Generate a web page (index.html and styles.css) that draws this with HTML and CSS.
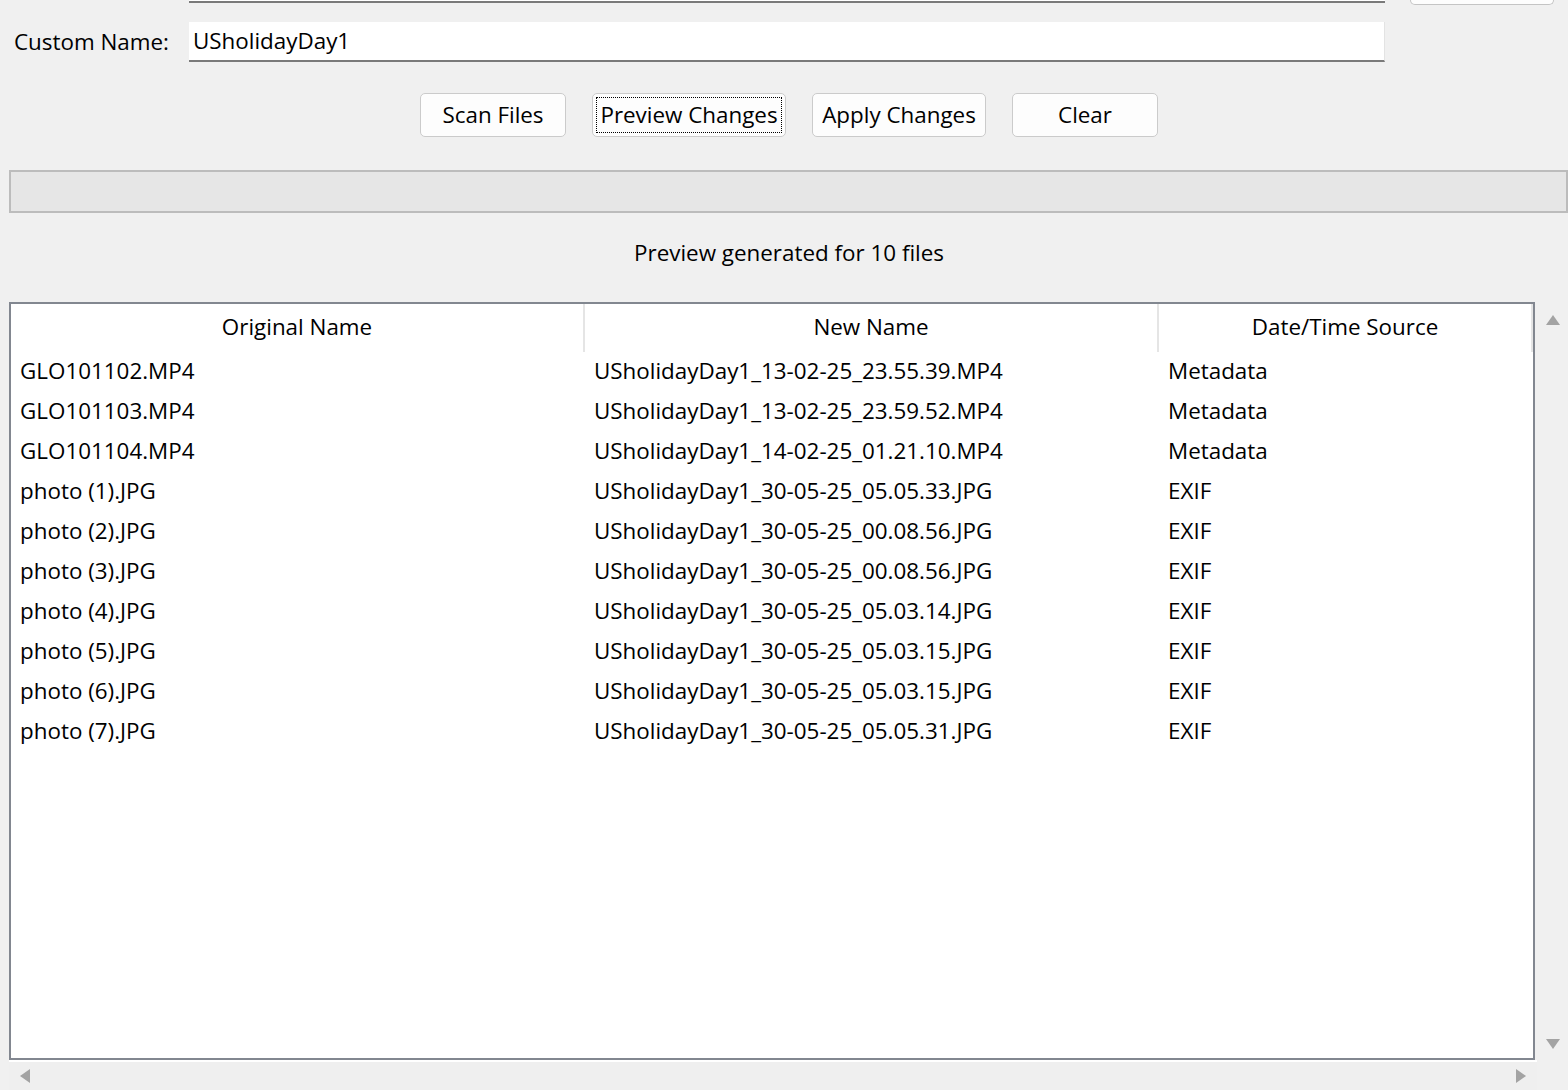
FILE: index.html
```html
<!DOCTYPE html>
<html>
<head>
<meta charset="utf-8">
<link rel="stylesheet" href="styles.css">
</head>
<body>
<div class="top-row">
  <div class="top-entry"></div>
  <div class="top-button"></div>
</div>

<div class="name-row">
  <label class="name-label">Custom Name:</label>
  <div class="name-entry">USholidayDay1</div>
</div>

<div class="button-row">
  <button class="btn btn-scan">Scan Files</button>
  <button class="btn btn-preview"><span class="focus">Preview Changes</span></button>
  <button class="btn btn-apply">Apply Changes</button>
  <button class="btn btn-clear">Clear</button>
</div>

<div class="progress"></div>

<div class="status">Preview generated for 10 files</div>

<div class="tree-wrap">
  <div class="tree">
    <div class="tree-head">
      <div class="th th1">Original Name</div>
      <div class="th th2">New Name</div>
      <div class="th th3">Date/Time Source</div>
    </div>
    <div class="tree-body">
      <div class="tr"><div class="td">GLO101102.MP4</div><div class="td">USholidayDay1_13-02-25_23.55.39.MP4</div><div class="td">Metadata</div></div>
      <div class="tr"><div class="td">GLO101103.MP4</div><div class="td">USholidayDay1_13-02-25_23.59.52.MP4</div><div class="td">Metadata</div></div>
      <div class="tr"><div class="td">GLO101104.MP4</div><div class="td">USholidayDay1_14-02-25_01.21.10.MP4</div><div class="td">Metadata</div></div>
      <div class="tr"><div class="td">photo (1).JPG</div><div class="td">USholidayDay1_30-05-25_05.05.33.JPG</div><div class="td">EXIF</div></div>
      <div class="tr"><div class="td">photo (2).JPG</div><div class="td">USholidayDay1_30-05-25_00.08.56.JPG</div><div class="td">EXIF</div></div>
      <div class="tr"><div class="td">photo (3).JPG</div><div class="td">USholidayDay1_30-05-25_00.08.56.JPG</div><div class="td">EXIF</div></div>
      <div class="tr"><div class="td">photo (4).JPG</div><div class="td">USholidayDay1_30-05-25_05.03.14.JPG</div><div class="td">EXIF</div></div>
      <div class="tr"><div class="td">photo (5).JPG</div><div class="td">USholidayDay1_30-05-25_05.03.15.JPG</div><div class="td">EXIF</div></div>
      <div class="tr"><div class="td">photo (6).JPG</div><div class="td">USholidayDay1_30-05-25_05.03.15.JPG</div><div class="td">EXIF</div></div>
      <div class="tr"><div class="td">photo (7).JPG</div><div class="td">USholidayDay1_30-05-25_05.05.31.JPG</div><div class="td">EXIF</div></div>
    </div>
  </div>
  <div class="vscroll">
    <svg class="arrow" width="16" height="12" viewBox="0 0 16 12"><path d="M8 1 L15 11 L1 11 Z" fill="#a3a3a3"/></svg>
    <svg class="arrow" width="16" height="12" viewBox="0 0 16 12"><path d="M1 1 L15 1 L8 11 Z" fill="#a3a3a3"/></svg>
  </div>
  <div class="hscroll">
    <svg class="arrow" width="12" height="16" viewBox="0 0 12 16"><path d="M11 1 L11 15 L1 8 Z" fill="#a3a3a3"/></svg>
    <svg class="arrow" width="12" height="16" viewBox="0 0 12 16"><path d="M1 1 L11 8 L1 15 Z" fill="#a3a3a3"/></svg>
  </div>
  <div class="corner"></div>
</div>
</body>
</html>
```

FILE: styles.css
```css
html, body {
  margin: 0;
  padding: 0;
  background: #f0f0f0;
  width: 1568px;
  height: 1090px;
  overflow: hidden;
  font-family: "Open Sans", "Noto Sans", sans-serif;
  font-size: 22.4px;
  color: #000;
}

.top-row {
  display: flex;
  align-items: flex-end;
  height: 5px;
  padding-left: 189px;
}

.top-entry {
  width: 1196px;
  height: 1px;
  background: #fff;
  border-bottom: 2px solid #7a7a7a;
  align-self: flex-start;
}

.top-button {
  margin-left: 25px;
  width: 144px;
  height: 5px;
  box-sizing: border-box;
  background: #fdfdfd;
  border: 1px solid #c4c4c4;
  border-top: none;
  border-radius: 0 0 5px 5px;
}

.name-row {
  display: flex;
  align-items: center;
  margin-top: 17px;
  height: 40px;
}

.name-label {
  width: 175px;
  padding-left: 14px;
  padding-bottom: 2px;
}

.name-entry {
  width: 1196px;
  height: 40px;
  box-sizing: border-box;
  background: #fff;
  border-right: 1px solid #e3e3e3;
  border-bottom: 2px solid #7a7a7a;
  padding-left: 4px;
  line-height: 38px;
}

.button-row {
  display: flex;
  gap: 26px;
  margin-top: 31px;
  padding-left: 420px;
  height: 44px;
}

.btn {
  height: 44px;
  box-sizing: border-box;
  background: #fdfdfd;
  border: 1px solid #cbcbcb;
  border-radius: 5px;
  font: inherit;
  color: #000;
  padding: 0 0 1px 0;
}

.btn-scan { width: 146px; }
.btn-preview { width: 194px; padding: 3px; }
.btn-apply { width: 174px; }
.btn-clear { width: 146px; }

.focus {
  display: flex;
  align-items: center;
  justify-content: center;
  height: 100%;
  box-sizing: border-box;
  border: 1.5px dotted #000;
  padding-bottom: 1px;
  white-space: nowrap;
}

.progress {
  margin: 33px 0 0 9px;
  height: 43px;
  width: 1559px;
  box-sizing: border-box;
  background: #e6e6e6;
  border: 2px solid #bcbcbc;
}

.status {
  height: 89px;
  line-height: 80px;
  padding-left: 10px;
  text-align: center;
}

.tree-wrap {
  display: grid;
  grid-template-columns: 1528px 31px;
  grid-template-rows: 760px 28px;
  margin-left: 9px;
}

.tree {
  box-sizing: border-box;
  width: 1526px;
  height: 758px;
  background: #fff;
  border: 2px solid #828790;
}

.tree-head {
  display: grid;
  grid-template-columns: 574px 574px 374px;
  height: 48px;
}

.th {
  display: flex;
  align-items: center;
  justify-content: center;
  border-right: 2px solid #e5e5e5;
  padding-bottom: 3px;
  white-space: nowrap;
}

.tr {
  display: grid;
  grid-template-columns: 574px 574px 374px;
  height: 40px;
  align-items: center;
  padding-bottom: 3px;
  box-sizing: border-box;
}

.td {
  padding-left: 9px;
  white-space: nowrap;
}

.vscroll {
  display: flex;
  flex-direction: column;
  justify-content: space-between;
  align-items: center;
  padding: 12px 0 12px 0;
  background: #f0f0f0;
}

.hscroll {
  display: flex;
  justify-content: space-between;
  align-items: center;
  padding: 0 10px 0 10px;
  background: #efefef;
  border-top: 2px solid #fff;
  margin-top: -2px;
  height: 28px;
}

.corner {
  background: #f0f0f0;
}
```
